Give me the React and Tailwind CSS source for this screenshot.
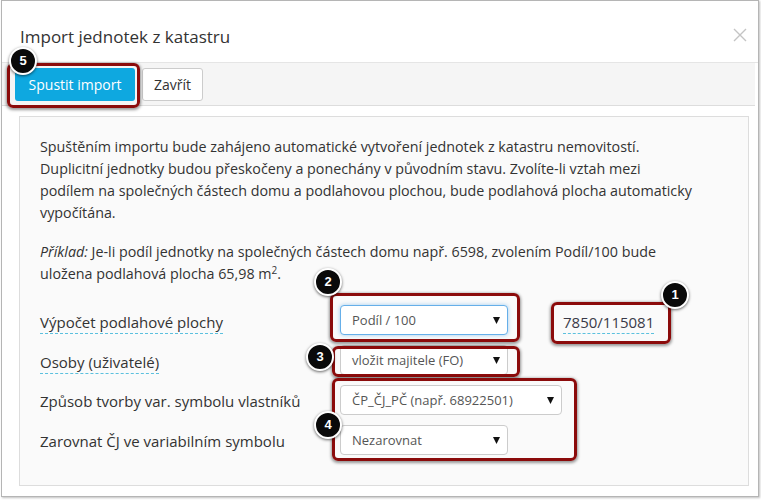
import React from 'react';

const Badge = ({ n, className }) => (
    <div className={`absolute w-[28px] h-[28px] rounded-full bg-[#0a0a0a] border-2 border-white shadow-[0_1px_3px_rgba(0,0,0,0.6)] flex items-center justify-center text-white text-[13px] font-bold font-['Liberation_Sans',Arial,sans-serif] ${className}`}>
        {n}
    </div>
);

const Callout = ({ className }) => (
    <div className={`absolute border-[3px] border-[#8b0b0b] rounded-[6px] shadow-[0_1px_3px_1px_rgba(0,0,0,0.4)] ${className}`} />
);

const Arrow = () => (
    <svg width="7" height="7" viewBox="0 0 7 7" className="shrink-0">
        <polygon points="0,0 7,0 3.5,7" fill="#111" />
    </svg>
);

const Select = ({ value, width, focus }) => (
    <div
        className={`${width} h-[30px] bg-white rounded-[4px] flex items-center justify-between pl-[11px] pr-[7px] text-[13px] text-[#555] ${
            focus
                ? 'border border-[#66afe9] shadow-[0_0_4px_rgba(102,175,233,0.6)]'
                : 'border border-[#ccc]'
        }`}
    >
        <span>{value}</span>
        <Arrow />
    </div>
);

function App() {
    return (
        <div className="relative w-[761px] h-[500px] bg-white overflow-hidden font-['Open_Sans',sans-serif] text-[#333]">
            <div className="ml-[1px] w-[758px] h-[497px] border border-[#b5b5b5] shadow-[1px_1px_2px_rgba(0,0,0,0.25)] bg-white flex flex-col">
                {/* hlavička */}
                <div className="h-[62px] border-b border-[#e5e5e5] flex justify-between pl-[18px] pr-[11px]">
                    <h4 className="text-[17px] leading-[24px] pt-[24px] text-[#333]">Import jednotek z katastru</h4>
                    <svg width="14" height="14" viewBox="0 0 14 14" className="mt-[27px]">
                        <path d="M1 1 L13 13 M13 1 L1 13" stroke="#c4c4c4" strokeWidth="1.4" />
                    </svg>
                </div>

                {/* lišta s tlačítky */}
                <div className="h-[43px] mr-[3px] bg-[#f5f5f5] border-b border-[#ddd] flex items-center gap-[7px] pl-[13px]">
                    <button className="w-[120px] h-[33px] rounded-[3px] bg-[#0ea8e0] text-white text-[14px]">
                        Spustit import
                    </button>
                    <button className="w-[61px] h-[33px] rounded-[3px] bg-white border border-[#ccc] text-[#333] text-[14px]">
                        Zavřít
                    </button>
                </div>

                {/* panel */}
                <div className="flex-1 mt-[10px] ml-[17px] mr-[9px] mb-[10px] border border-[#ddd] bg-[#fafafa] px-[20px] pt-[19px] text-[14.3px] leading-[22px]">
                    <p className="mb-[17px] whitespace-nowrap">
                        Spuštěním importu bude zahájeno automatické vytvoření jednotek z katastru nemovitostí.<br />
                        Duplicitní jednotky budou přeskočeny a ponechány v původním stavu. Zvolíte-li vztah mezi<br />
                        podílem na společných částech domu a podlahovou plochou, bude podlahová plocha automaticky<br />
                        vypočítána.
                    </p>
                    <p className="whitespace-nowrap">
                        <i>Příklad:</i> Je-li podíl jednotky na společných částech domu např. 6598, zvolením Podíl/100 bude<br />
                        uložena podlahová plocha 65,98 m<sup className="text-[10px]">2</sup>.
                    </p>

                    <div className="mt-[20px] flex flex-col gap-[10px] text-[15px]">
                        <div className="flex h-[30px]">
                            <div className="w-[300px] pt-[6px]">
                                <span className="inline-block leading-[21px] border-b border-dashed border-[#5bc0de]">Výpočet podlahové plochy</span>
                            </div>
                            <Select value="Podíl / 100" width="w-[168px]" focus />
                            <div className="ml-[55px] pt-[6px]">
                                <span className="inline-block text-[15px] leading-[21px] text-[#3a3a48] border-b border-dashed border-[#5bc0de]">7850/115081</span>
                            </div>
                        </div>
                        <div className="flex h-[30px]">
                            <div className="w-[300px] pt-[6px]">
                                <span className="inline-block leading-[21px] border-b border-dashed border-[#5bc0de]">Osoby (uživatelé)</span>
                            </div>
                            <Select value="vložit majitele (FO)" width="w-[168px]" />
                        </div>
                        <div className="flex h-[30px]">
                            <div className="w-[300px] pt-[6px] leading-[21px]">Způsob tvorby var. symbolu vlastníků</div>
                            <Select value="ČP_ČJ_PČ (např. 68922501)" width="w-[222px]" />
                        </div>
                        <div className="flex h-[30px]">
                            <div className="w-[300px] pt-[6px] leading-[21px]">Zarovnat ČJ ve variabilním symbolu</div>
                            <Select value="Nezarovnat" width="w-[168px]" />
                        </div>
                    </div>
                </div>
            </div>

            {/* anotace */}
            <Callout className="left-[7px] top-[63px] w-[133px] h-[45px]" />
            <Callout className="left-[330px] top-[293px] w-[190px] h-[49px]" />
            <Callout className="left-[551px] top-[302px] w-[120px] h-[42px]" />
            <Callout className="left-[332px] top-[346px] w-[188px] h-[31px]" />
            <Callout className="left-[332px] top-[378px] w-[245px] h-[83px]" />

            <Badge n="5" className="left-[9px] top-[47px]" />
            <Badge n="2" className="left-[314px] top-[268px]" />
            <Badge n="1" className="left-[661px] top-[281px]" />
            <Badge n="3" className="left-[306px] top-[343px]" />
            <Badge n="4" className="left-[314px] top-[411px]" />
        </div>
    );
}

export default App;
